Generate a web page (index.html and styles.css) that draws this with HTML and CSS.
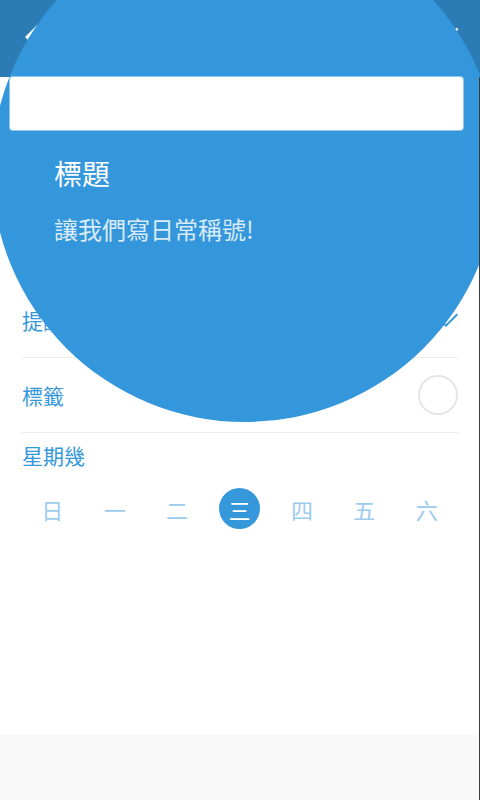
FILE: index.html
```html
<!DOCTYPE html>
<html lang="zh-Hant">
<head>
<meta charset="utf-8">
<title>新增日常</title>
<link rel="stylesheet" href="styles.css">
</head>
<body>
<div class="screen">
  <header class="toolbar">
    <svg class="tb-icon" viewBox="0 0 24 24"><path d="M20 11H7.83l5.59-5.59L12 4l-8 8 8 8 1.41-1.41L7.83 13H20v-2z"/></svg>
    <svg class="tb-icon" viewBox="0 0 24 24"><path d="M9 16.17L4.83 12l-1.42 1.41L9 19 21 7l-1.41-1.41z"/></svg>
  </header>
  <main class="content">
    <div class="title-field"></div>
    <section class="settings">
      <div class="row">
        <span class="row-label">提醒</span>
        <svg class="row-check" viewBox="0 0 24 24"><path d="M9 16.17L4.83 12l-1.42 1.41L9 19 21 7l-1.41-1.41z"/></svg>
      </div>
      <div class="row">
        <span class="row-label">標籤</span>
        <span class="color-dot"></span>
      </div>
      <div class="week-label">星期幾</div>
      <div class="days">
        <span class="day">日</span>
        <span class="day">一</span>
        <span class="day">二</span>
        <span class="day"><span class="day-selected">三</span></span>
        <span class="day">四</span>
        <span class="day">五</span>
        <span class="day">六</span>
      </div>
    </section>
  </main>
  <footer class="bottom-bar"></footer>
  <div class="showcase">
    <div class="showcase-circle"></div>
    <div class="showcase-text">
      <h2 class="showcase-title">標題</h2>
      <p class="showcase-desc">讓我們寫日常稱號!</p>
    </div>
  </div>
  <div class="edge-line"></div>
</div>
</body>
</html>
```
FILE: styles.css
```css
html, body {
  margin: 0;
  padding: 0;
  background: #ffffff;
}
body {
  font-family: "Noto Sans CJK TC", "Noto Sans", sans-serif;
}
.screen {
  position: relative;
  z-index: 0;
  width: 480px;
  height: 800px;
  overflow: hidden;
  display: flex;
  flex-direction: column;
  background: #ffffff;
}
.toolbar {
  height: 77px;
  flex: 0 0 77px;
  box-sizing: border-box;
  background: #2b7cb5;
  display: flex;
  justify-content: space-between;
  align-items: flex-start;
  padding: 19px 17px 0 19px;
}
.tb-icon {
  width: 36px;
  height: 36px;
  fill: #ffffff;
}
.content {
  flex: 1;
  display: flex;
  flex-direction: column;
}
.title-field {
  position: relative;
  z-index: 3;
  margin-left: 10px;
  width: 453px;
  height: 53px;
  background: #ffffff;
  border-radius: 3px;
  box-shadow: 0 0 0 1px rgba(255, 255, 255, 0.45);
}
.settings {
  margin-top: 153px;
  padding: 0 22px;
  display: flex;
  flex-direction: column;
}
.row {
  height: 74px;
  border-bottom: 1px solid #ebebeb;
  display: flex;
  align-items: center;
  justify-content: space-between;
}
.row-label,
.week-label {
  font-size: 21px;
  color: #3498db;
  line-height: 30px;
}
.row-check {
  width: 24px;
  height: 24px;
  fill: #3498db;
  margin-right: -3px;
}
.color-dot {
  width: 36px;
  height: 36px;
  border: 2px solid #e6e6e6;
  border-radius: 50%;
}
.week-label {
  margin-top: 7px;
}
.days {
  margin: 18px 0 0 -1px;
  display: grid;
  grid-template-columns: repeat(7, 1fr);
}
.day {
  height: 41px;
  display: flex;
  align-items: center;
  justify-content: center;
  font-size: 22px;
  line-height: 1;
  color: #9bcbed;
}
.day-selected {
  width: 41px;
  height: 41px;
  border-radius: 50%;
  background: #3498db;
  color: #ffffff;
  display: flex;
  align-items: center;
  justify-content: center;
}
.bottom-bar {
  height: 65px;
  flex: 0 0 65px;
  background: #f9f9f9;
}
.showcase {
  position: absolute;
  inset: 0;
  z-index: 2;
  pointer-events: none;
}
.showcase-circle {
  position: absolute;
  left: -8px;
  top: -84px;
  width: 506px;
  height: 506px;
  border-radius: 50%;
  background: #3597db;
}
.showcase-text {
  position: relative;
  padding: 155px 0 0 54px;
}
.showcase-title {
  margin: 0;
  font-size: 28px;
  font-weight: 400;
  line-height: 36px;
  color: #ffffff;
}
.showcase-desc {
  margin: 22px 0 0;
  font-size: 24px;
  line-height: 32px;
  color: rgba(255, 255, 255, 0.82);
}
.edge-line {
  position: absolute;
  top: 77px;
  bottom: 0;
  right: 0;
  width: 1px;
  background: #3d3d3d;
  z-index: 4;
}
```
